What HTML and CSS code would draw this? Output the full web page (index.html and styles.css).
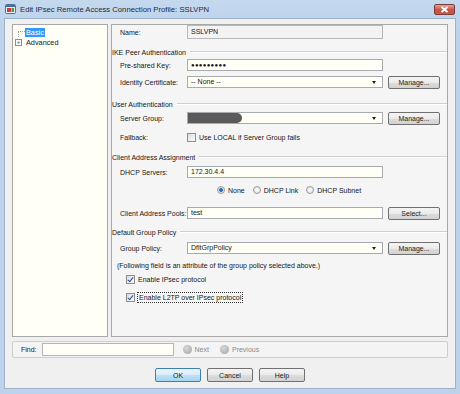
FILE: index.html
```html
<!DOCTYPE html>
<html lang="en">
<head>
  <meta charset="UTF-8" />
  <title>Edit IPsec Remote Access Connection Profile: SSLVPN</title>
  <link rel="stylesheet" href="styles.css">
</head>
<body>
  <div class="window">
    <!-- Title bar -->
    <div class="titlebar">
      <svg class="title-icon" width="11" height="10" viewBox="0 0 11 10">
        <rect x="0.5" y="0.5" width="10" height="9" rx="1" fill="#e8eef6" stroke="#5a6f8c"/>
        <rect x="1" y="1" width="9" height="2" fill="#3d6fb0"/>
        <rect x="2" y="4" width="4" height="4" fill="#d23b2f"/>
        <rect x="6.5" y="4" width="2.5" height="4" fill="#4a9a3c"/>
      </svg>
      <span class="title">Edit IPsec Remote Access Connection Profile: SSLVPN</span>
      <div class="close-btn">
        <svg width="9" height="7" viewBox="0 0 9 7">
          <path d="M1.5 1 L7.5 6 M7.5 1 L1.5 6" stroke="#fff" stroke-width="1.8"/>
        </svg>
      </div>
    </div>

    <div class="dialog">
      <div class="panes">
        <!-- Navigation tree -->
        <div class="tree">
          <div class="tree-item">
            <span class="twig twig-line"></span>
            <span class="tree-label selected">Basic</span>
          </div>
          <div class="tree-item">
            <span class="twig"><span class="expander">+</span></span>
            <span class="tree-label">Advanced</span>
          </div>
        </div>

        <!-- Form -->
        <div class="main">
          <div class="row row-name">
            <span class="label">Name:</span>
            <div class="field disabled">SSLVPN</div>
          </div>

          <div class="group-title gt-ike">IKE Peer Authentication</div>
          <div class="row r-1">
            <span class="label">Pre-shared Key:</span>
            <div class="field secret">●●●●●●●●●</div>
          </div>
          <div class="row r-3">
            <span class="label">Identity Certificate:</span>
            <div class="field select">-- None --<span class="arrow"></span></div>
            <button class="btn">Manage...</button>
          </div>

          <div class="group-title gt-user">User Authentication</div>
          <div class="row r-2">
            <span class="label">Server Group:</span>
            <div class="field select"><span class="redacted"></span><span class="arrow"></span></div>
            <button class="btn">Manage...</button>
          </div>
          <div class="row r-5">
            <span class="label">Fallback:</span>
            <span class="check"></span>
            <span>Use LOCAL if Server Group fails</span>
          </div>

          <div class="group-title gt-client">Client Address Assignment</div>
          <div class="row r-3">
            <span class="label">DHCP Servers:</span>
            <div class="field">172.30.4.4</div>
          </div>
          <div class="row r-4">
            <div class="radios">
              <span class="radio on"></span><span>None</span>
              <span class="radio"></span><span>DHCP Link</span>
              <span class="radio"></span><span>DHCP Subnet</span>
            </div>
          </div>
          <div class="row r-9">
            <span class="label">Client Address Pools:</span>
            <div class="field">test</div>
            <button class="btn">Select...</button>
          </div>

          <div class="group-title gt-policy">Default Group Policy</div>
          <div class="row r-4">
            <span class="label">Group Policy:</span>
            <div class="field select">DfltGrpPolicy<span class="arrow"></span></div>
            <button class="btn">Manage...</button>
          </div>
          <div class="row note r-3">(Following field is an attribute of the group policy selected above.)</div>
          <div class="row indent">
            <span class="check on"></span>
            <span>Enable IPsec protocol</span>
          </div>
          <div class="row indent r-4">
            <span class="check on"></span>
            <span class="focused">Enable L2TP over IPsec protocol</span>
          </div>
        </div>
      </div>

      <!-- Find bar -->
      <div class="findbar">
        <span>Find:</span>
        <div class="find-input"></div>
        <span class="nav-dot"></span><span class="nav-text">Next</span>
        <span class="nav-dot"></span><span class="nav-text">Previous</span>
      </div>

      <div class="actions">
        <button class="btn btn-default">OK</button>
        <button class="btn">Cancel</button>
        <button class="btn">Help</button>
      </div>
    </div>
  </div>
</body>
</html>
```

FILE: styles.css
```css
* {
  box-sizing: border-box;
}

body {
  margin: 0;
  width: 460px;
  height: 394px;
  overflow: hidden;
  font-family: 'Liberation Sans', Arial, sans-serif;
  font-size: 7px;
  color: #161616;
  background: #bcd3eb;
}

.window {
  height: 394px;
  display: flex;
  flex-direction: column;
  padding: 0 4px 5px 4px;
  background: linear-gradient(#c4d8ee, #bcd3eb 30px);
}

/* Title bar */
.titlebar {
  height: 18px;
  display: flex;
  align-items: center;
  gap: 4px;
  padding-left: 1px;
}

.title {
  flex: 1;
  font-size: 7.7px;
  color: #1e2a3a;
}

.close-btn {
  width: 21px;
  height: 11px;
  margin-right: 1px;
  margin-top: 1px;
  display: flex;
  align-items: center;
  justify-content: center;
  border: 1px solid #7a3a3a;
  border-radius: 2px;
  background: linear-gradient(#e5a69a, #c7503f 55%, #c25a48);
}

/* Dialog body */
.dialog {
  flex: 1;
  display: flex;
  flex-direction: column;
  background: #f0f0f0;
  border: 1px solid #9fb4cc;
  padding: 5px 7px 0 7px;
}

.panes {
  display: flex;
  gap: 3px;
  height: 313px;
}

.tree {
  width: 96px;
  background: #fffff6;
  border: 1px solid #a8a8a8;
  padding-top: 2px;
}

.tree-item {
  display: flex;
  align-items: center;
  height: 10px;
}

.twig {
  width: 12px;
  height: 10px;
  display: flex;
  align-items: center;
  justify-content: flex-end;
}

.twig-line {
  position: relative;
}

.twig-line::before {
  content: "";
  position: absolute;
  left: 5px;
  right: 0;
  top: 4px;
  border-top: 1px dotted #999;
}

.twig-line::after {
  content: "";
  position: absolute;
  left: 5px;
  top: 4px;
  height: 6px;
  border-left: 1px dotted #999;
}

.expander {
  width: 7px;
  height: 7px;
  margin-right: 3px;
  border: 1px solid #8c8c8c;
  background: #fff;
  font-size: 6px;
  line-height: 5px;
  text-align: center;
  color: #2a4a7a;
}

.tree-label {
  padding: 0 1px;
  line-height: 9px;
  font-size: 7.3px;
}

.tree-label.selected {
  background: #3399ff;
  color: #fff;
}

.main {
  flex: 1;
  background: #f5f5f5;
  border: 1px solid #a8a8a8;
}

/* Form rows */
.row {
  display: flex;
  align-items: center;
  height: 14px;
  padding-left: 8px;
  white-space: nowrap;
}

.label {
  width: 67px;
  flex-shrink: 0;
}

.field {
  width: 196px;
  height: 12px;
  line-height: 10px;
  padding: 0 3px;
  background: #fffff5;
  border: 1px solid #a7abb0;
  position: relative;
  white-space: nowrap;
}

.field.disabled {
  height: 14px;
  line-height: 12px;
  background: #f3f3f3;
  border-color: #b9b9b9;
}

.field.secret {
  font-size: 6px;
  letter-spacing: 0.3px;
}

.arrow {
  position: absolute;
  right: 6px;
  top: 4px;
  border-left: 2.5px solid transparent;
  border-right: 2.5px solid transparent;
  border-top: 3px solid #222;
}

.redacted {
  display: block;
  position: absolute;
  left: 0;
  top: 0;
  width: 54px;
  height: 10px;
  background: #5a5a5a;
  border-radius: 0 5px 5px 0;
}

.btn {
  font-family: inherit;
  font-size: 7px;
  color: #1b1b1b;
  width: 52px;
  height: 13px;
  margin-left: 5px;
  padding: 0;
  border: 1px solid #707070;
  border-radius: 2px;
  background: linear-gradient(#f4f4f4, #ebebeb 50%, #dcdcdc 51%, #d2d2d2);
}

.group-title {
  display: flex;
  align-items: center;
  gap: 4px;
  height: 10px;
}

.group-title::after {
  content: "";
  flex: 1;
  border-top: 1px solid #cfcfcf;
  border-bottom: 1px solid #fff;
}

.gt-ike { margin-top: 8px; }
.gt-user { margin-top: 10px; }
.gt-client { margin-top: 8px; }
.gt-policy { margin-top: 7px; }

.r-1 { margin-top: 1px; }
.r-2 { margin-top: 2px; }
.r-3 { margin-top: 3px; }
.r-4 { margin-top: 4px; }
.r-5 { margin-top: 5px; }
.r-9 { margin-top: 9px; }

.check {
  width: 9px;
  height: 9px;
  margin-right: 3px;
  border: 1px solid #8e8f8f;
  background: linear-gradient(135deg, #dcdcdc, #fbfbfb);
  position: relative;
}

.check.on::after {
  content: "";
  position: absolute;
  left: 2px;
  top: 0;
  width: 2px;
  height: 5px;
  border-right: 1.5px solid #2a4fa0;
  border-bottom: 1.5px solid #2a4fa0;
  transform: rotate(40deg);
}

.radios {
  display: flex;
  align-items: center;
  margin-left: 97px;
}

.radio {
  width: 8px;
  height: 8px;
  margin-right: 3px;
  border-radius: 50%;
  border: 1px solid #9a9a9a;
  background: radial-gradient(#fff, #dcdcdc);
}

.radio.on {
  background: radial-gradient(#2f6fc0 1.6px, #e6e6e6 2.2px);
}

.radios span + .radio {
  margin-left: 8px;
}

.note {
  padding-left: 5px;
}

.indent {
  padding-left: 14px;
}

.focused {
  outline: 1px dotted #333;
  padding: 1px 1px;
}

/* Find bar */
.findbar {
  display: flex;
  align-items: center;
  height: 17px;
  margin-top: 4px;
  padding-left: 8px;
  background: #f4f4f4;
  border: 1px solid #cdcdcd;
  border-radius: 2px;
}

.find-input {
  width: 132px;
  height: 13px;
  margin-left: 5px;
  margin-right: 9px;
  background: #fffff8;
  border: 1px solid #b5b5b5;
}

.nav-dot {
  width: 9px;
  height: 9px;
  border-radius: 50%;
  background: radial-gradient(circle at 40% 35%, #d8d8d8, #a0a0a0);
  margin-right: 3px;
}

.nav-text {
  color: #8a8a8a;
  margin-right: 11px;
}

/* Dialog buttons */
.actions {
  display: flex;
  justify-content: center;
  gap: 6px;
  margin-top: 10px;
}

.actions .btn {
  width: 46px;
  height: 14px;
  margin-left: 0;
}

.btn-default {
  border-color: #3c7fb1;
  background: linear-gradient(#eaf4fb, #d9ecf9 50%, #bfe0f5 51%, #a9d4f0);
}
```
